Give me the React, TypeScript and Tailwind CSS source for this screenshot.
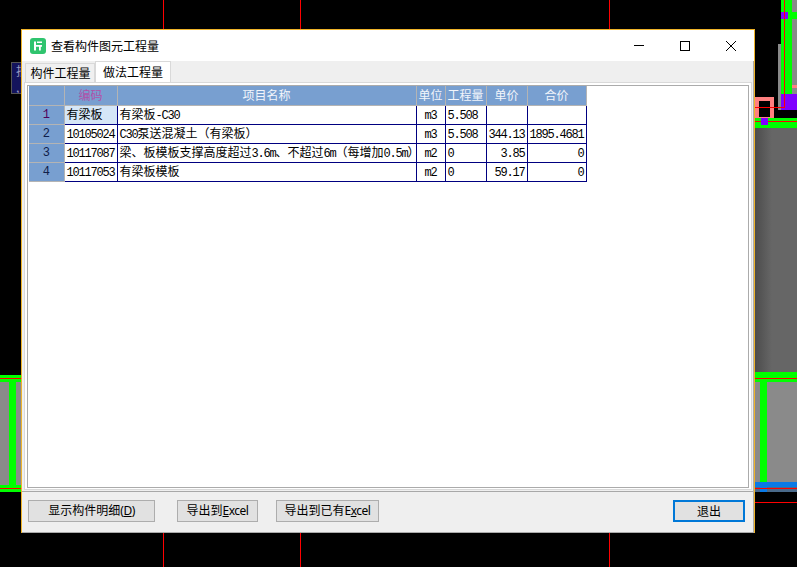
const CJK = /([\u3000-\u9fff\uff00-\uffef]+)/;

const HEAD = ['', '编码', '项目名称', '单位', '工程量', '单价', '合价'];
const WIDTHS = [35, 53, 299, 29, 41, 41, 59];

const ROWS = [
  { n: '1', code: '有梁板', name: '有梁板-C30', unit: 'm3', qty: '5.508', price: '', total: '' },
  { n: '2', code: '10105024', name: 'C30泵送混凝土（有梁板）', unit: 'm3', qty: '5.508', price: '344.13', total: '1895.4681' },
  { n: '3', code: '10117087', name: '梁、板模板支撑高度超过3.6m、不超过6m（每增加0.5m）', unit: 'm2', qty: '0', price: '3.85', total: '0' },
  { n: '4', code: '10117053', name: '有梁板模板', unit: 'm2', qty: '0', price: '59.17', total: '0' },
];

// latin runs sit at half the CJK width, like the bitmap font in the original
function Txt({ v }: { v: string }) {
  return (
    <>
      {v.split(CJK).map((part, i) =>
        CJK.test(part) ? (
          <span key={i}>{part}</span>
        ) : (
          <span key={i} className="font-['Liberation_Mono',monospace] tracking-[-1.2px]">
            {part}
          </span>
        ),
      )}
    </>
  );
}

function Cell({ children, className = '' }: { children?: React.ReactNode; className?: string }) {
  return (
    <td className={`h-[19px] whitespace-nowrap border-r border-b border-[#000080] p-0 ${className}`}>
      {children}
    </td>
  );
}

function CadBackground() {
  return (
    <svg className="absolute inset-0" width="797" height="567" viewBox="0 0 797 567">
      <defs>
        <linearGradient id="shade" x1="0" x2="1" y1="0" y2="0">
          <stop offset="0" stopColor="#4c4c4c" />
          <stop offset="0.4" stopColor="#666666" />
          <stop offset="1" stopColor="#666666" />
        </linearGradient>
      </defs>
      <rect width="797" height="567" fill="#000" />
      <rect x="163" y="0" width="1" height="567" fill="#f00" />
      <rect x="300" y="0" width="1" height="567" fill="#f00" />
      <rect x="609" y="0" width="1" height="567" fill="#f00" />

      {/* left wall */}
      <rect x="0" y="375" width="21" height="117" fill="#0f0" />
      <rect x="0" y="382" width="9" height="103" fill="#8a8a8a" />
      <rect x="16" y="382" width="5" height="103" fill="#8a8a8a" />
      <rect x="0" y="378" width="21" height="1" fill="#f00" />
      <rect x="0" y="488" width="21" height="1" fill="#f00" />

      {/* right column */}
      <rect x="778" y="44" width="3" height="66" fill="#8a8a8a" />
      <rect x="781" y="0" width="11" height="110" fill="#0f0" />
      <rect x="792" y="0" width="5" height="94" fill="#8a8a8a" />
      <rect x="792" y="12" width="5" height="7" fill="#0f0" />
      <rect x="781" y="12" width="7" height="7" fill="#8000ff" />
      <rect x="792" y="85" width="5" height="3" fill="#ff8080" />
      <rect x="781" y="94" width="16" height="16" fill="#8000ff" />
      <rect x="784" y="0" width="1" height="107" fill="#f00" />
      <rect x="757" y="99" width="15" height="20" fill="none" stroke="#ff8080" strokeWidth="4" />
      <rect x="755" y="107" width="30" height="1" fill="#f00" />
      <rect x="755" y="118" width="42" height="10" fill="#0f0" />
      <rect x="755" y="121" width="42" height="1" fill="#f00" />
      <rect x="761" y="118" width="7" height="7" fill="#8000ff" />

      {/* right wall */}
      <rect x="755" y="128" width="42" height="244" fill="url(#shade)" />
      <rect x="755" y="372" width="42" height="10" fill="#0f0" />
      <rect x="755" y="378" width="42" height="1" fill="#f00" />
      <rect x="755" y="382" width="42" height="100" fill="#8a8a8a" />
      <rect x="760" y="382" width="7" height="100" fill="#0f0" />
      <rect x="755" y="482" width="42" height="5" fill="#0a7ae6" />
      <rect x="755" y="487" width="42" height="5" fill="#4a6a8a" />
      <rect x="760" y="482" width="7" height="10" fill="#0a7ae6" />
      <rect x="755" y="488" width="42" height="1" fill="#f00" />
      <rect x="755" y="502" width="42" height="1" fill="#f00" />
    </svg>
  );
}

function FootButton({ className = '', children }: { className?: string; children: React.ReactNode }) {
  return (
    <button className={`h-[22px] bg-[#e1e1e1] text-[12px] leading-none text-black ${className}`}>
      {children}
    </button>
  );
}

export default function App() {
  return (
    <div className="relative h-[567px] w-[797px] overflow-hidden bg-black font-['Noto_Sans_CJK_SC',sans-serif] text-[12px] text-black">
      <CadBackground />

      {/* tooltip peeking out from behind the dialog */}
      <div className="absolute left-[11px] top-[62px] h-[32px] w-[40px] overflow-hidden border border-[#555] bg-[#14145c] pl-[4px] text-[12px] leading-[16px] text-[#9a9ac0]">
        批
        <br />,
      </div>

      <div className="absolute left-[21px] top-[29px] flex h-[504px] w-[734px] flex-col border-x border-t border-x-[#f0b429] border-t-[#f0b429] bg-[#efefef]">
        {/* title bar */}
        <div className="flex h-[31px] shrink-0 items-center bg-white">
          <svg className="ml-[8px] mr-[5px]" width="16" height="16" viewBox="0 0 16 16">
            <rect width="16" height="16" rx="3" fill="#2fc46e" />
            <path d="M4 3.5h2v9H4zM6 7h6v1.8H6zM7 3.5h5v1.6H7zM9 8.8h1.8v3.7H9z" fill="#fff" />
          </svg>
          <span className="leading-none">查看构件图元工程量</span>
          <div className="ml-auto flex">
            <div className="flex h-[31px] w-[46px] items-center justify-center">
              <div className="h-px w-[10px] bg-black" />
            </div>
            <div className="flex h-[31px] w-[46px] items-center justify-center">
              <div className="h-[10px] w-[10px] border border-black" />
            </div>
            <div className="flex h-[31px] w-[46px] items-center justify-center">
              <svg width="10" height="10" viewBox="0 0 10 10">
                <path d="M0 0L10 10M10 0L0 10" stroke="#000" strokeWidth="1" />
              </svg>
            </div>
          </div>
        </div>

        <div className="flex min-h-0 flex-1 flex-col border-r border-b border-[#ababab]">
          {/* tabs */}
          <div className="flex h-[21px] shrink-0 items-end pl-[3px]">
            <div className="flex h-[19px] w-[70px] items-center justify-center border-x border-t border-[#d9d9d9] bg-[#f0f0f0] pl-[1px] leading-none">
              构件工程量
            </div>
            <div className="flex h-[21px] w-[76px] items-center justify-center border-x border-t border-[#d9d9d9] bg-white leading-none">
              做法工程量
            </div>
          </div>

          {/* panel */}
          <div className="ml-[2px] mr-[1px] flex min-h-0 flex-1 border border-[#d9d9d9] bg-white pb-[1px] pl-[2px] pr-[2px] pt-[2px]">
            <div className="min-w-0 flex-1 border border-[#ababab] bg-white">
              <table className="ml-px table-fixed border-collapse text-[12px] leading-none" style={{ width: 557 }}>
                <colgroup>
                  {WIDTHS.map((w, i) => (
                    <col key={i} style={{ width: w }} />
                  ))}
                </colgroup>
                <thead>
                  <tr className="h-[19px] bg-[#789fd0]">
                    {HEAD.map((h, i) => (
                      <th
                        key={i}
                        className={`overflow-hidden whitespace-nowrap border-r border-b border-[#b4b4b4] p-0 text-center font-normal ${
                          i === 1 ? 'text-[#b050a8]' : 'text-[#f2f5fb]'
                        }`}
                      >
                        {h}
                      </th>
                    ))}
                  </tr>
                </thead>
                <tbody>
                  {ROWS.map((r, i) => (
                    <tr key={r.n}>
                      <td
                        className={`h-[19px] border-r border-b border-[#b4b4b4] bg-[#789fd0] p-0 text-center font-['Liberation_Mono',monospace] ${
                          i === 0 ? 'text-[#50005a]' : 'text-[#10204a]'
                        }`}
                      >
                        {r.n}
                      </td>
                      <Cell className={`pl-[2px] ${i === 0 ? 'bg-[#d5e6f7]' : ''}`}>
                        <Txt v={r.code} />
                      </Cell>
                      <Cell className="pl-[2px]">
                        <Txt v={r.name} />
                      </Cell>
                      <Cell className="text-center">
                        <Txt v={r.unit} />
                      </Cell>
                      <Cell className="pl-[2px]">
                        <Txt v={r.qty} />
                      </Cell>
                      <Cell className="pr-[2px] text-right">
                        <Txt v={r.price} />
                      </Cell>
                      <Cell className="pr-[2px] text-right">
                        <Txt v={r.total} />
                      </Cell>
                    </tr>
                  ))}
                </tbody>
              </table>
            </div>
          </div>

          {/* footer */}
          <div className="mt-px flex h-[41px] shrink-0 items-center border-t border-[#a8a8a8] pb-[3px] pl-[6px] pr-[8px]">
            <FootButton className="w-[127px] border border-[#adadad]">
              显示构件明细<span className="font-['Noto_Sans',sans-serif] tracking-[-0.5px]">(<u>D</u>)</span>
            </FootButton>
            <FootButton className="ml-[22px] w-[81px] border border-[#adadad]">
              导出到<span className="font-['Noto_Sans',sans-serif] tracking-[-0.5px]"><u>E</u>xcel</span>
            </FootButton>
            <FootButton className="ml-[18px] w-[103px] border border-[#adadad]">
              导出到已有<span className="font-['Noto_Sans',sans-serif] tracking-[-0.5px]">E<u>x</u>cel</span>
            </FootButton>
            <FootButton className="ml-auto w-[72px] border-2 border-[#0078d7]">退出</FootButton>
          </div>
        </div>
      </div>
    </div>
  );
}
